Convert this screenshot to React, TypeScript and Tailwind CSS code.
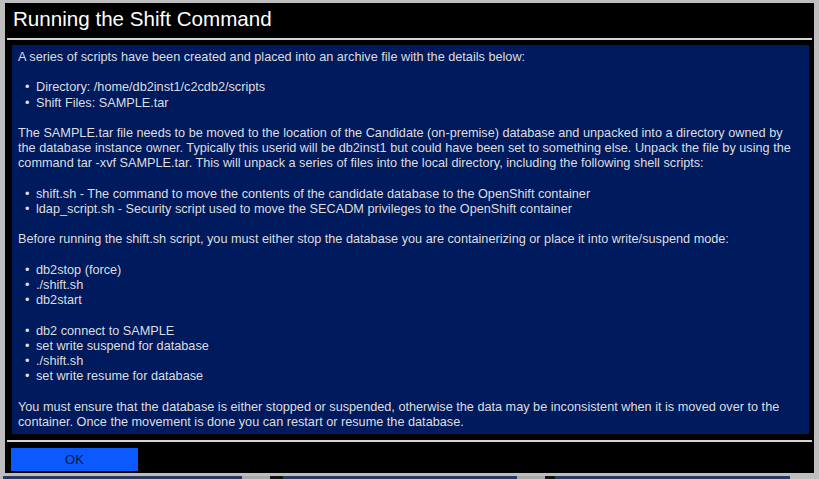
const filesInfo = [
  "Directory: /home/db2inst1/c2cdb2/scripts",
  "Shift Files: SAMPLE.tar",
]

const shellScripts = [
  "shift.sh - The command to move the contents of the candidate database to the OpenShift container",
  "ldap_script.sh - Security script used to move the SECADM privileges to the OpenShift container",
]

const stopSteps = ["db2stop (force)", "./shift.sh", "db2start"]

const suspendSteps = [
  "db2 connect to SAMPLE",
  "set write suspend for database",
  "./shift.sh",
  "set write resume for database",
]

function Bullets({ items }: { items: string[] }) {
  return (
    <ul className="mb-[15.2px]">
      {items.map((item, i) => (
        <li key={i} className="flex">
          <span className="w-[18px] pl-[7px] shrink-0">•</span>
          <span>{item}</span>
        </li>
      ))}
    </ul>
  )
}

export default function App() {
  return (
    <div
      className="w-[819px] h-[479px] bg-[#bebebe] flex flex-col overflow-hidden"
      style={{ fontFamily: '"Liberation Sans", Arial, sans-serif' }}
    >
      <div className="mt-[3px] ml-[5px] w-[809px] h-[470px] bg-black flex flex-col">
        {/* Title */}
        <div className="h-[35px] pl-[8px] pt-[3px] text-[20.6px] leading-[26px] text-white">
          Running the Shift Command
        </div>
        <div className="mx-[2px] h-[2px] bg-[#d4d4d4]"></div>

        {/* Body */}
        <div className="mt-[5px] ml-[7px] mr-[5px] h-[389px] bg-[#001a5e] px-[6px] pt-[5px] text-[12.7px] leading-[15.2px] text-[#dedede]">
          <p className="mb-[15.2px]">
            A series of scripts have been created and placed into an archive file with the details below:
          </p>
          <Bullets items={filesInfo} />
          <p className="mb-[15.2px]">
            The SAMPLE.tar file needs to be moved to the location of the Candidate (on-premise) database and unpacked
            into a directory owned by the database instance owner. Typically this userid will be db2inst1 but could
            have been set to something else. Unpack the file by using the command tar -xvf SAMPLE.tar. This will
            unpack a series of files into the local directory, including the following shell scripts:
          </p>
          <Bullets items={shellScripts} />
          <p className="mb-[15.2px]">
            Before running the shift.sh script, you must either stop the database you are containerizing or place it
            into write/suspend mode:
          </p>
          <Bullets items={stopSteps} />
          <Bullets items={suspendSteps} />
          <p>
            You must ensure that the database is either stopped or suspended, otherwise the data may be inconsistent
            when it is moved over to the container. Once the movement is done you can restart or resume the database.
          </p>
        </div>

        <div className="mt-[6px] mx-[2px] h-[2px] bg-[#d4d4d4]"></div>

        {/* Footer */}
        <div className="pt-[5px] pl-[6px]">
          <button className="w-[127px] h-[23px] bg-[#0a5aff] text-[13px] text-[#061a40]">OK</button>
        </div>
      </div>

      {/* Window behind */}
      <div className="mt-[3px] flex h-[3px]">
        <div className="w-[3px] bg-[#bebebe]"></div>
        <div className="w-[239px] bg-[#2b3a5c]"></div>
        <div className="w-[28px] bg-[#a9a9a9]"></div>
        <div className="w-[13px] bg-[#111]"></div>
        <div className="w-[234px] bg-[#2b3a5c]"></div>
        <div className="w-[28px] bg-[#a9a9a9]"></div>
        <div className="w-[10px] bg-[#111]"></div>
        <div className="w-[235px] bg-[#2b3a5c]"></div>
        <div className="flex-1 bg-[#bebebe]"></div>
      </div>
    </div>
  )
}
